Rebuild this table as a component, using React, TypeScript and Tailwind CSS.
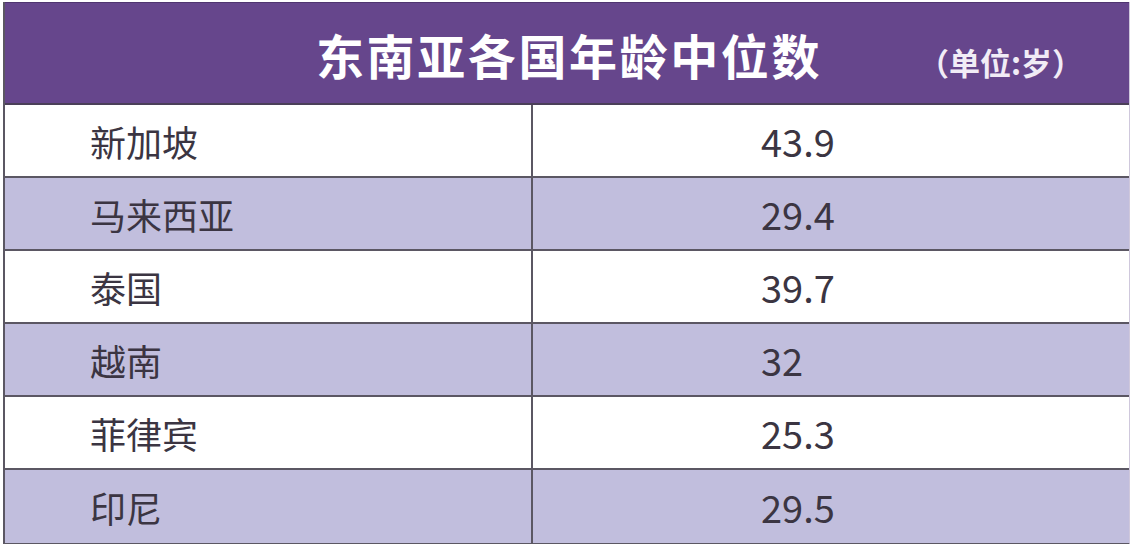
const rows = [
  { name: "新加坡", value: "43.9" },
  { name: "马来西亚", value: "29.4" },
  { name: "泰国", value: "39.7" },
  { name: "越南", value: "32" },
  { name: "菲律宾", value: "25.3" },
  { name: "印尼", value: "29.5" },
];

const cjk = { fontFamily: '"Noto Sans CJK SC", "Noto Sans", sans-serif' };

export default function App() {
  return (
    <div className="w-[1132px] h-[544px] bg-white overflow-hidden pt-[2px] pl-[3px]" style={cjk}>
      <div className="w-[1127px] border-l-2 border-b-2 border-r border-[#5b5763] border-r-[#cfc8dc]">
        <div className="relative h-[103px] bg-[#66468c] border-t border-[#4f3570] border-b-2 border-b-[#4a3f58] flex items-center justify-center">
          <h1 className="text-[48px] font-bold tracking-[2.6px] text-white leading-none pt-[2px] pl-[4px]">
            东南亚各国年龄中位数
          </h1>
          <span className="absolute right-[46px] top-[43px] text-[31px] font-bold text-[#f1ecf6] leading-none">
            （单位:岁）
          </span>
        </div>
        {rows.map((r, i) => (
          <div
            key={r.name}
            className={`flex h-[73px] ${i < rows.length - 1 ? "border-b-2 border-[#5b5763]" : ""} ${
              i % 2 === 0 ? "bg-white" : "bg-[#c1bedd]"
            }`}
          >
            <div className="w-[528px] border-r-2 border-[#5b5763] flex items-center pl-[85px] text-[36px] text-[#3b3542] leading-none">
              {r.name}
            </div>
            <div className="flex-1 flex items-center pl-[228px] text-[38px] text-[#3b3542] leading-none">
              {r.value}
            </div>
          </div>
        ))}
      </div>
    </div>
  );
}
